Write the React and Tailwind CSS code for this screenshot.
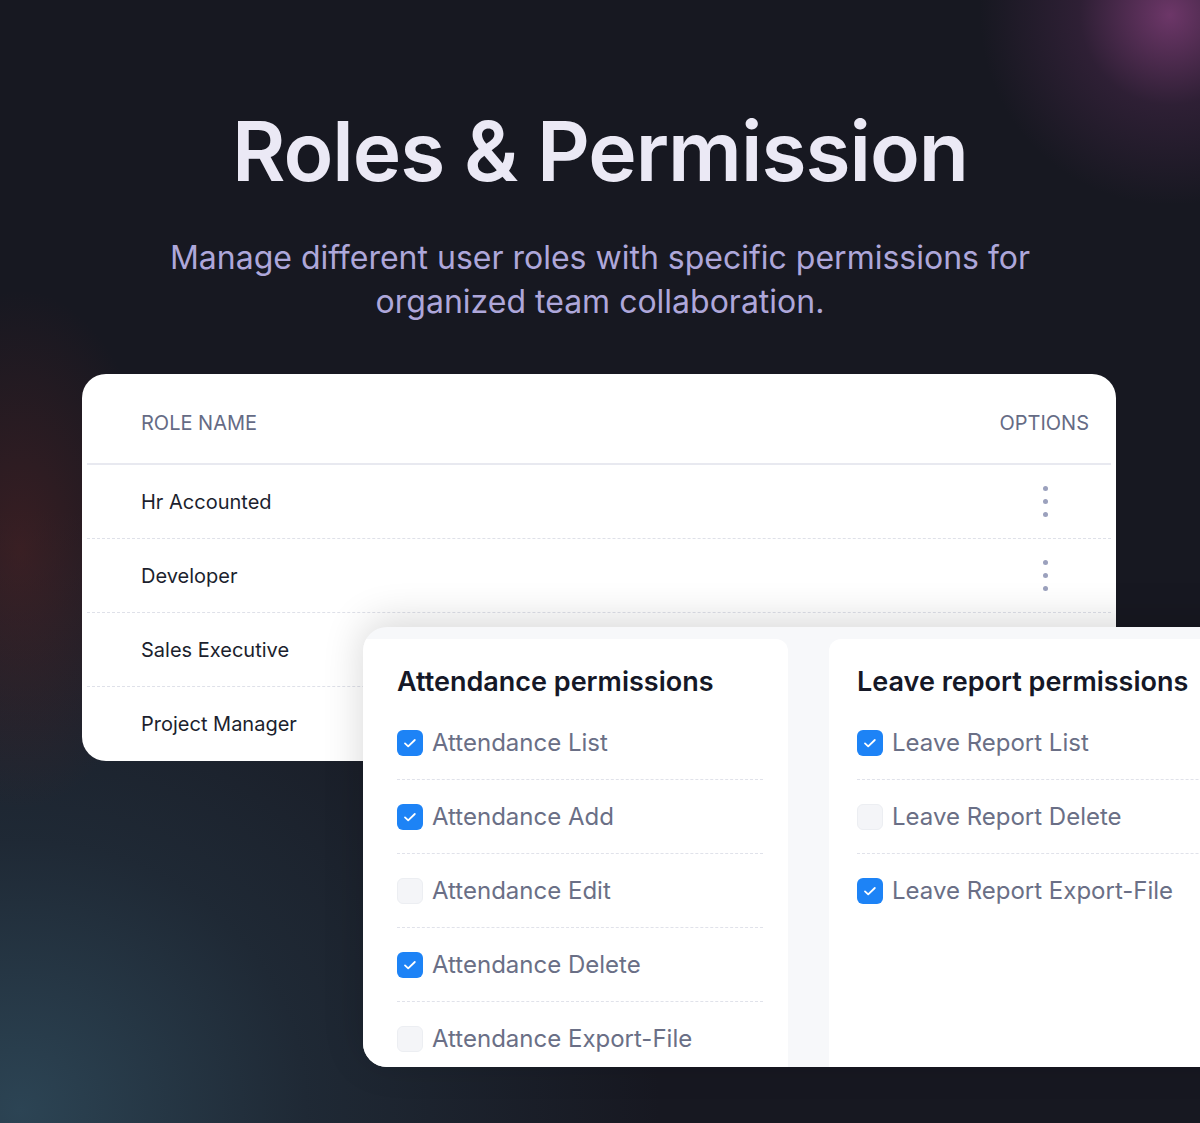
import React from 'react'

const ROLES = ['Hr Accounted', 'Developer', 'Sales Executive', 'Project Manager']

const ATTENDANCE = [
  { label: 'Attendance List', checked: true },
  { label: 'Attendance Add', checked: true },
  { label: 'Attendance Edit', checked: false },
  { label: 'Attendance Delete', checked: true },
  { label: 'Attendance Export-File', checked: false },
]

const LEAVE = [
  { label: 'Leave Report List', checked: true },
  { label: 'Leave Report Delete', checked: false },
  { label: 'Leave Report Export-File', checked: true },
]

function Kebab() {
  return (
    <div className="flex flex-col items-center gap-[8px]">
      <span className="w-[5px] h-[5px] rounded-full bg-[#9ba1bd]" />
      <span className="w-[5px] h-[5px] rounded-full bg-[#9ba1bd]" />
      <span className="w-[5px] h-[5px] rounded-full bg-[#9ba1bd]" />
    </div>
  )
}

function Checkbox({ checked }) {
  if (!checked) {
    return <span className="w-[26px] h-[26px] shrink-0 rounded-[6px] bg-[#f4f5f8] border border-[#eceef2]" />
  }
  return (
    <span className="w-[26px] h-[26px] shrink-0 rounded-[6px] bg-[#1d83f6] flex items-center justify-center">
      <svg width="16" height="16" viewBox="0 0 16 16" fill="none">
        <path d="M3 8.4l3.2 3 6.6-6.4" stroke="#fff" strokeWidth="1.8" strokeLinecap="round" strokeLinejoin="round" />
      </svg>
    </span>
  )
}

function PermissionList({ title, items }) {
  return (
    <div>
      <h3 className="text-[27px] leading-[32px] font-semibold text-[#151827] mb-[8px]">{title}</h3>
      {items.map((item, i) => (
        <div
          key={item.label}
          className={`h-[74px] flex items-center gap-[9px] ${i < items.length - 1 ? 'border-b border-dashed border-[#e0e2ea]' : ''}`}
        >
          <Checkbox checked={item.checked} />
          <span className="text-[24px] text-[#6a6f86] whitespace-nowrap">{item.label}</span>
        </div>
      ))}
    </div>
  )
}

export default function App() {
  return (
    <div
      className="relative w-full h-[1123px] overflow-hidden bg-[#171821] bg-[radial-gradient(circle_at_1170px_15px,rgba(130,62,122,0.8)_0px,rgba(90,45,90,0.35)_90px,transparent_190px),radial-gradient(ellipse_140px_260px_at_20px_550px,rgba(90,36,36,0.5),transparent),radial-gradient(ellipse_640px_600px_at_20px_1110px,rgba(44,68,84,1),rgba(36,52,66,0.6)_45%,transparent)]"
      style={{ fontFamily: 'Inter, "Noto Sans", sans-serif' }}
    >
      <div className="flex flex-col items-center pt-[102px]">
        <h1 className="text-[82px] leading-[100px] font-semibold tracking-[-1px] text-[#ebe9f5]">Roles &amp; Permission</h1>
        <p className="mt-[34px] text-center text-[32px] leading-[44px] text-[#aea7da]">
          Manage different user roles with specific permissions for
          <br />
          organized team collaboration.
        </p>
      </div>

      <div className="ml-[82px] mt-[50px] w-[1034px] rounded-[24px] bg-white px-[5px]">
        <div className="flex items-center justify-between h-[91px] border-b-2 border-[#e8e9f0] pl-[54px] pr-[22px] pt-[8px]">
          <span className="text-[20px] text-[#656b85] uppercase">Role Name</span>
          <span className="text-[20px] text-[#656b85] uppercase">Options</span>
        </div>
        {ROLES.map((role, i) => (
          <div
            key={role}
            className={`flex items-center justify-between h-[74px] pl-[54px] pr-[22px] ${i < ROLES.length - 1 ? 'border-b border-dashed border-[#dfe1e9]' : ''}`}
          >
            <span className="text-[20px] text-[#1c1f2e]">{role}</span>
            <div className="w-[88px] flex justify-center">
              <Kebab />
            </div>
          </div>
        ))}
      </div>

      <div className="relative ml-[363px] -mt-[134px] w-[960px] h-[440px] rounded-[24px] bg-[#f7f8fa] pt-[12px] flex gap-[41px] overflow-hidden shadow-[0_-6px_40px_rgba(0,0,0,0.16)]">
        <div className="w-[425px] bg-white rounded-tr-[12px] pl-[34px] pr-[25px] pt-[27px]">
          <PermissionList title="Attendance permissions" items={ATTENDANCE} />
        </div>
        <div className="flex-1 bg-white rounded-tl-[12px] pl-[28px] pt-[27px]">
          <PermissionList title="Leave report permissions" items={LEAVE} />
        </div>
      </div>
    </div>
  )
}
